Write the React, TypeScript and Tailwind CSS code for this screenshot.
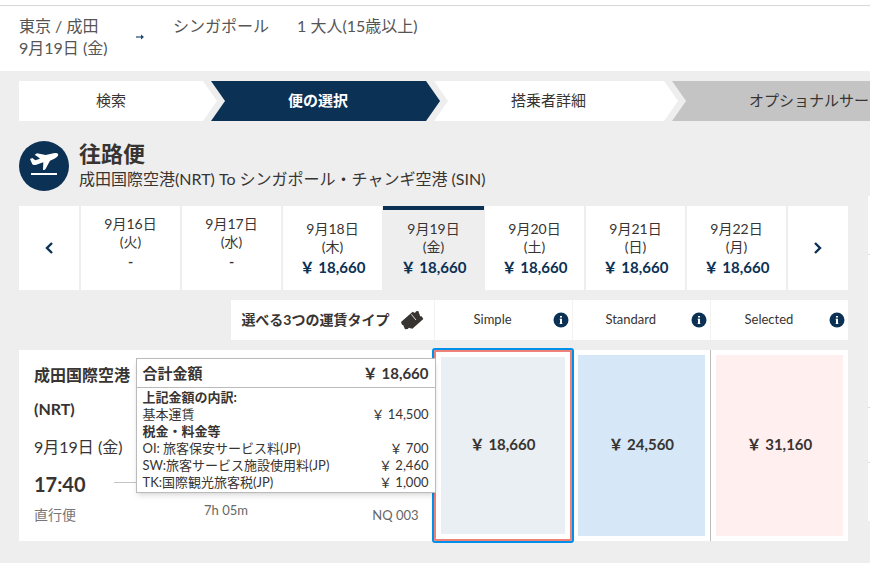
import type { ReactNode } from "react";

const steps = [
  { label: "検索", state: "first" },
  { label: "便の選択", state: "current" },
  { label: "搭乗者詳細", state: "done" },
  { label: "オプショナルサービス", state: "upcoming" },
];

const stepStyle: Record<string, string> = {
  first:
    "pr-[91px] bg-white [clip-path:polygon(0_0,calc(100%-14px)_0,100%_50%,calc(100%-14px)_100%,0_100%)]",
  current:
    "-ml-1.5 pr-[92px] bg-[#0b3154] font-bold text-white [clip-path:polygon(0_0,calc(100%-14px)_0,100%_50%,calc(100%-14px)_100%,0_100%,14px_50%)]",
  done: "-ml-1.5 pr-[92px] bg-white [clip-path:polygon(0_0,calc(100%-14px)_0,100%_50%,calc(100%-14px)_100%,0_100%,14px_50%)]",
  upcoming:
    "-ml-1.5 pr-[92px] bg-[#c4c4c4] [clip-path:polygon(0_0,calc(100%-14px)_0,100%_50%,calc(100%-14px)_100%,0_100%,14px_50%)]",
};

const dates = [
  { day: "9月16日", week: "(火)", price: null },
  { day: "9月17日", week: "(水)", price: null },
  { day: "9月18日", week: "(木)", price: 18660 },
  { day: "9月19日", week: "(金)", price: 18660, active: true },
  { day: "9月20日", week: "(土)", price: 18660 },
  { day: "9月21日", week: "(日)", price: 18660 },
  { day: "9月22日", week: "(月)", price: 18660 },
];

const taxes = [
  { name: "OI: 旅客保安サービス料(JP)", amount: 700 },
  { name: "SW:旅客サービス施設使用料(JP)", amount: 2460 },
  { name: "TK:国際観光旅客税(JP)", amount: 1000 },
];

// Full-width yen sign, as is usual beside Japanese text.
const yen = (amount: number) => `\uFFE5 ${amount.toLocaleString("en-US")}`;

function Chevron({ flip = false }: { flip?: boolean }) {
  return (
    <svg width="8" height="12" viewBox="0 0 8 12" fill="none" stroke="#0b3154" strokeWidth="2.4" aria-hidden="true">
      <path d={flip ? "M1 1l5 5-5 5" : "M7 1L2 6l5 5"} />
    </svg>
  );
}

function InfoIcon() {
  return (
    <svg width="16" height="16" viewBox="0 0 16 16" aria-hidden="true">
      <circle cx="8" cy="8" r="7.5" fill="#0b3154" />
      <path d="M7 4h2v1.600H7zM7 6.800h2v5.200H7z" fill="#fff" />
      <path d="M6.300 6.800H8v.7H6.300zM6.300 11.300h3.400v.7H6.300z" fill="#fff" opacity=".6" />
    </svg>
  );
}

function TakeoffIcon() {
  return (
    <svg width="50" height="50" viewBox="0 0 150 150" className="shrink-0" aria-hidden="true">
      <circle cx="75" cy="75" r="75" fill="#0b3154" />
      <path
        d="M33 54l7-3 9 7 14-5-6-5-10-7 7-4 26 5 17-4q11-4 18-1 4 3 2 7-3 5-11 9l-13 6-13 24q-2 5-8 4l1-23-21 7q-9 3-12-1z"
        fill="#fff"
      />
      <path d="M36 96h78v6H36z" fill="#fff" />
    </svg>
  );
}

function TicketIcon() {
  return (
    <svg width="24" height="20" viewBox="0 0 72 60" aria-hidden="true">
      <path
        d="M3 36l35-31 5 3q4 1 5-4l7-1 4 11q0 6 6 5l5 8-33 29-6-1q-5-4-7 2l-9 1-4-9q1-5-5-5z"
        fill="#383432"
      />
      <path d="M34 13l14 17" stroke="#ddd" strokeWidth="3" fill="none" />
    </svg>
  );
}

function FareHeading({ name }: { name: string }) {
  return (
    <div className="flex items-center border-l border-[#f2f2f2] bg-white pr-[3px]">
      <span className="flex-1 pr-0.5 text-center text-[13px]">{name}</span>
      <button type="button" aria-label={`${name}の詳細`}>
        <InfoIcon />
      </button>
    </div>
  );
}

function AmountRow({ name, children }: { name: string; children: ReactNode }) {
  return (
    <div className="flex justify-between">
      <dt>{name}</dt>
      <dd>{children}</dd>
    </div>
  );
}

export default function App() {
  return (
    <div className="min-h-screen overflow-hidden bg-[#eee] font-['Lato','Noto_Sans_CJK_JP',sans-serif] text-[#383432]">
      <header className="bg-white pt-[5px]">
        <div className="flex border-t border-[#d8d8d8] px-[19px] pt-[9px] pb-3 text-base leading-[22px] text-[#555]">
          <div className="w-[116px]">
            <p>東京 / 成田</p>
            <p>9月19日 (金)</p>
          </div>
          <svg width="10" height="8" viewBox="0 0 10 8" className="mt-[18px] mr-7" aria-hidden="true">
            <path d="M1 4h7" stroke="#1d4a75" strokeWidth="1.200" />
            <path d="M6 1.500L9 4 6 6.500z" fill="#1d4a75" />
          </svg>
          <p className="w-[124px]">シンガポール</p>
          <p>1 大人(15歳以上)</p>
        </div>
      </header>

      <nav className="pt-2.5 pl-[19px]">
        <ol className="flex h-10 text-[15px]">
          {steps.map((s) => (
            <li
              key={s.label}
              className={`flex shrink-0 items-center pb-0.5 pl-[77px] whitespace-nowrap ${stepStyle[s.state]}`}
            >
              {s.label}
            </li>
          ))}
        </ol>
      </nav>

      <div className="flex gap-5 pl-[19px]">
        <main className="min-w-0 flex-1">
          <div className="flex items-center gap-2.5 pt-5 pb-[15px]">
            <TakeoffIcon />
            <div>
              <h1 className="text-[22px] leading-[26px] font-bold">往路便</h1>
              <p className="text-base leading-6">成田国際空港(NRT) To シンガポール・チャンギ空港 (SIN)</p>
            </div>
          </div>

          <div className="flex h-[84px] gap-0.5 text-sm leading-[18px]">
            <button type="button" aria-label="前の日付" className="flex w-[60px] items-center justify-center bg-white">
              <Chevron />
            </button>
            {dates.map((d) => (
              <button
                type="button"
                key={d.day}
                className={`flex flex-1 flex-col items-center ${
                  d.active
                    ? "relative pt-3.5 before:absolute before:-inset-x-px before:top-0 before:h-1 before:bg-[#0b3154]"
                    : d.price
                      ? "bg-white pt-3.5"
                      : "bg-white pt-[9px]"
                }`}
              >
                <span>{d.day}</span>
                <span>{d.week}</span>
                {d.price ? (
                  <span className="pt-0.5 text-[15px] leading-[18px] font-bold text-[#0b3154]">{yen(d.price)}</span>
                ) : (
                  <span className="pt-0.5 font-bold">-</span>
                )}
              </button>
            ))}
            <button type="button" aria-label="次の日付" className="flex w-[60px] items-center justify-center bg-white">
              <Chevron flip />
            </button>
          </div>

          <div className="mt-2.5 grid h-10 grid-cols-[3fr_1fr_1fr_1fr]">
            <div className="flex items-center gap-2.5 justify-self-end bg-white px-2.5">
              <h2 className="text-sm font-bold whitespace-nowrap">選べる3つの運賃タイプ</h2>
              <TicketIcon />
            </div>
            <FareHeading name="Simple" />
            <FareHeading name="Standard" />
            <FareHeading name="Selected" />
          </div>

          <section className="mt-2.5 grid h-[191px] grid-cols-[3fr_1fr_1fr_1fr] bg-white">
            <div className="flex px-[15px]">
              <div className="w-20 shrink-0 whitespace-nowrap">
                <p className="pt-2 text-base leading-[34px] font-bold">
                  成田国際空港
                  <br />
                  (NRT)
                </p>
                <p className="text-base leading-[42px]">9月19日 (金)</p>
                <p className="text-xl leading-8 font-bold">17:40</p>
                <p className="text-sm leading-[30px] text-[#777]">直行便</p>
              </div>
              <div className="mt-[132px] w-[224px] border-t border-[#c4c4c4] pt-[18px] text-center text-[13px] text-[#666]">
                7h 05m
              </div>
              <p className="mt-[156px] ml-auto text-[13px] text-[#666]">NQ 003</p>
            </div>

            <div className="relative rounded-[1px] border-2 border-[#ef8278] outline-2 outline-[#0090ea]">
              <button
                type="button"
                className="h-full w-full border-[5px] border-white bg-[#eaeff3] pb-0.5 text-[15px] font-bold"
              >
                {yen(18660)}
              </button>
              <div
                role="tooltip"
                className="absolute top-1.5 right-full w-[300px] border border-[#bbb] bg-white text-[13px] leading-[17px] shadow-md"
              >
                <div className="flex justify-between border-b border-[#bbb] px-1.5 text-[15px] leading-7 font-bold">
                  <span>合計金額</span>
                  <span>{yen(18660)}</span>
                </div>
                <dl className="px-1.5 pt-px pb-px">
                  <dt className="font-bold">上記金額の内訳:</dt>
                  <AmountRow name="基本運賃">{yen(14500)}</AmountRow>
                  <dt className="font-bold">税金・料金等</dt>
                  {taxes.map((t) => (
                    <AmountRow key={t.name} name={t.name}>
                      {yen(t.amount)}
                    </AmountRow>
                  ))}
                </dl>
              </div>
            </div>

            <div className="border-l border-white p-[5px]">
              <button type="button" className="h-full w-full bg-[#d6e7f7] pb-0.5 text-[15px] font-bold">
                {yen(24560)}
              </button>
            </div>
            <div className="border-l border-[#bbb] p-[5px]">
              <button type="button" className="h-full w-full bg-[#fff0ef] pb-0.5 text-[15px] font-bold">
                {yen(31160)}
              </button>
            </div>
          </section>
        </main>

        <aside className="mt-[75px] h-[325px] w-0.5 shrink-0 bg-white">
          <div className="h-[59px] border-b border-[#ddd]" />
          <div className="h-[153px] border-b border-[#ddd]" />
          <div className="h-[55px] border-b border-[#ddd]" />
        </aside>
      </div>
    </div>
  );
}
